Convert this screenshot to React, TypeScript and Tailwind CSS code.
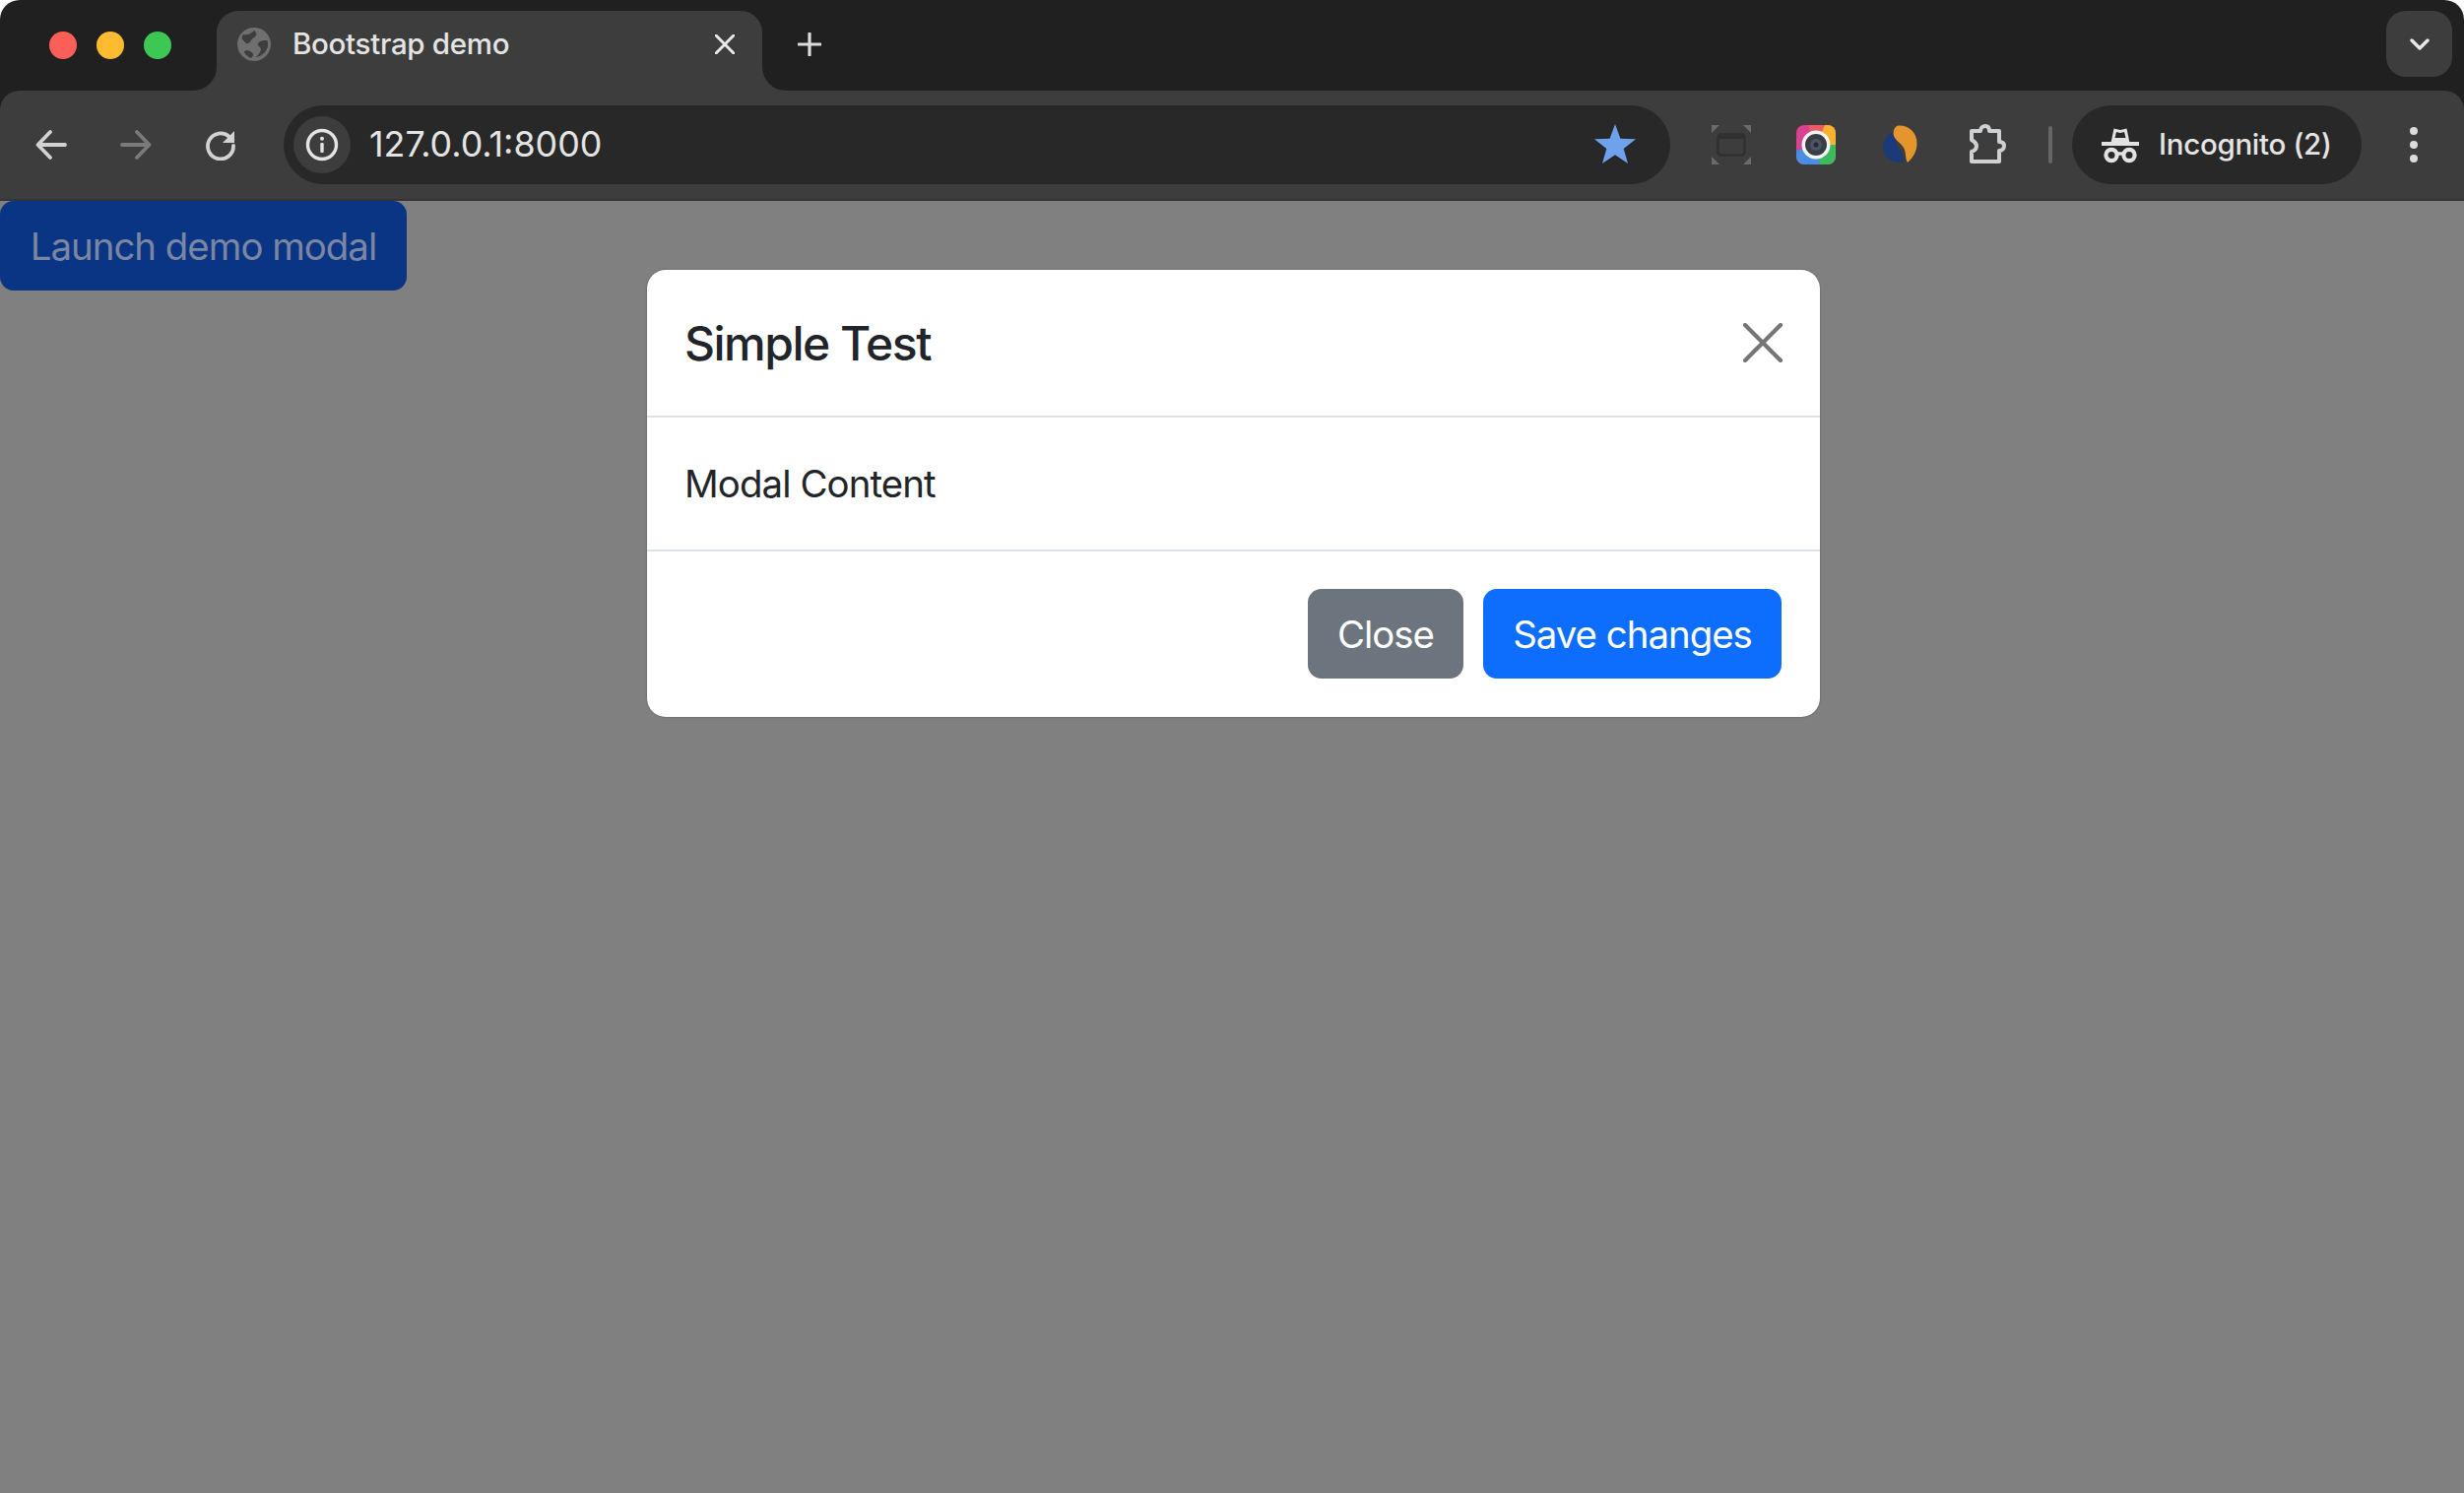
const sys = "font-['Inter','Liberation_Sans',sans-serif]";

function Globe() {
  return (
    <svg width="36" height="36" viewBox="0 0 36 36">
      <circle cx="18" cy="18" r="17" fill="#6f6f6f" />
      <path d="M7 8c5 1 8-1 11-4 3 2 3 5 0 7-3 1-3 5-6 6-3 1-4-3-6-4-1-2 0-3 1-5zM31 14c-3 0-7 0-9 3-1 3 2 3 3 6 0 3-3 5-5 8 6-1 12-6 12-13 0-2 0-3-1-4zM10 24c3 0 6 2 7 4 0 2-1 3-2 4-3-1-6-4-7-6 0-1 1-2 2-2z" fill="#3d3d3d" />
    </svg>
  );
}

function Back({ color }: { color: string }) {
  return (
    <svg width="32" height="30" viewBox="0 0 32 30" fill="none" stroke={color} strokeWidth="3.8" strokeLinecap="round" strokeLinejoin="round">
      <path d="M30 15H3M15 2 2.5 15 15 28" />
    </svg>
  );
}

function Forward({ color }: { color: string }) {
  return (
    <svg width="32" height="30" viewBox="0 0 32 30" fill="none" stroke={color} strokeWidth="3.8" strokeLinecap="round" strokeLinejoin="round">
      <path d="M2 15h27M17 2l12.500 13L17 28" />
    </svg>
  );
}

function Reload() {
  return (
    <svg width="32" height="32" viewBox="0 0 32 32" fill="none">
      <path d="M25 8A13 13 0 1 0 29 17" stroke="#d2d2d2" strokeWidth="3.8" strokeLinecap="round" />
      <path d="M30 2v12H18z" fill="#d2d2d2" />
    </svg>
  );
}

function Info() {
  return (
    <svg width="34" height="34" viewBox="0 0 34 34" fill="none">
      <circle cx="17" cy="17" r="14.500" stroke="#e4e4e4" strokeWidth="3.400" />
      <rect x="15.300" y="15" width="3.400" height="10" rx="1" fill="#e4e4e4" />
      <circle cx="17" cy="10.800" r="2" fill="#e4e4e4" />
    </svg>
  );
}

function Star() {
  return (
    <svg width="42" height="40" viewBox="0 0 42 40" className="-translate-y-[1px]">
      <path d="M21 0l5.400 14.800L42 15.300 29.700 25l4.300 15-13-8.800L8 40l4.300-15L0 15.300l15.600-.5z" fill="#6ea2ec" />
    </svg>
  );
}

function ScreenIcon() {
  return (
    <svg width="40" height="40" viewBox="0 0 40 40" fill="none">
      <path d="M0 0h8L0 8zM40 0v8L32 0zM0 40v-8l8 8zM40 40h-8l8-8z" fill="#6b6b6b" />
      <rect x="6.500" y="9.500" width="27" height="21" rx="3" stroke="#303030" strokeWidth="2.500" />
      <path d="M8 11h24v3H8z" fill="#2f2f2f" />
    </svg>
  );
}

function ColorLens() {
  return (
    <svg width="40" height="40" viewBox="0 0 40 40">
      <defs>
        <clipPath id="lens-clip">
          <rect x="0" y="0" width="40" height="40" rx="8" />
        </clipPath>
      </defs>
      <g clipPath="url(#lens-clip)">
        <rect width="40" height="40" fill="#d9428f" />
        <path d="M20 20 12 0h17z" fill="#ef5a63" />
        <path d="M20 20 29 0h11v20z" fill="#f6b32f" />
        <path d="M20 20h20v20H24z" fill="#3dbb5c" />
        <path d="M20 20 24 40H0V26z" fill="#4a8ee4" />
      </g>
      <circle cx="20" cy="20" r="14.500" fill="#f5f5f5" />
      <circle cx="20" cy="20" r="11" fill="#3a3d44" />
      <circle cx="20" cy="20" r="6" fill="#4a5568" />
      <circle cx="20" cy="20" r="2.500" fill="#262a33" />
    </svg>
  );
}

function Swirl() {
  return (
    <svg width="36" height="40" viewBox="0 0 36 40">
      <path d="M12 7C4 9 0 15 0 23c0 8 7 15 17 15 3 0 5-1 5-3-1-5-5-8-7-13-2-5-1-10-3-15z" fill="#1d3a78" />
      <path d="M14 1c9-2 18 4 20 13 2 9-2 18-9 24-3-5-1-10-4-15-3-5-8-7-10-12-1-4 0-8 3-10z" fill="#e4952c" />
    </svg>
  );
}

function Puzzle() {
  return (
    <svg width="42" height="42" viewBox="0 0 42 42" fill="none" className="translate-x-[2px]">
      <path d="M5 7h9c0-3 2-5 5-5s4 2 4 5h10v11c3 0 5 1 5 4s-2 5-5 5v11H5V28c3-1 5-3 5-6s-2-4-5-6z" stroke="#cfd0d3" strokeWidth="4" strokeLinejoin="round" />
    </svg>
  );
}

function IncognitoIcon() {
  return (
    <svg width="38" height="38" viewBox="0 0 38 38" fill="none">
      <path d="M9.500 17 12.500 2.500 19 4l6.500-1.500L28.500 17z" fill="#e2e2e2" />
      <path d="M13.500 12l1.500-6 4 1 4-1 1.500 6z" fill="#282828" />
      <path d="M0 16h38v4H0z" fill="#e2e2e2" />
      <circle cx="10" cy="29.500" r="5.600" stroke="#e2e2e2" strokeWidth="4.200" />
      <circle cx="28" cy="29.500" r="5.600" stroke="#e2e2e2" strokeWidth="4.200" />
      <path d="M15 28h8" stroke="#e2e2e2" strokeWidth="3.400" />
    </svg>
  );
}

function Cross({ size, color, width }: { size: number; color: string; width: number }) {
  return (
    <svg width={size} height={size} viewBox="0 0 40 40" fill="none" stroke={color} strokeWidth={width} strokeLinecap="round">
      <path d="M2 2l36 36M38 2 2 38" />
    </svg>
  );
}

function TabStrip() {
  return (
    <div className="flex h-[92px] items-end bg-[#202020] rounded-t-[20px]">
      <div className="flex h-full w-[196px] shrink-0 items-start gap-[20px] pl-[50px] pt-[32px]">
        <span className="h-[28px] w-[28px] rounded-full bg-[#fc5f57]" />
        <span className="h-[28px] w-[28px] rounded-full bg-[#fdbb2f]" />
        <span className="h-[28px] w-[28px] rounded-full bg-[#3dc853]" />
      </div>
      <div className="h-[24px] w-[24px] shrink-0 bg-[#3d3d3d]">
        <div className="h-full w-full rounded-br-[24px] bg-[#202020]" />
      </div>
      <div className="flex h-[81px] w-[554px] shrink-0 items-center rounded-t-[22px] bg-[#3d3d3d] pb-[14px] pl-[20px] pr-[28px]">
        <Globe />
        <span className="ml-[21px] flex-1 text-[29.5px] font-medium tracking-[-0.3px] leading-none text-[#e4e4e4]">Bootstrap demo</span>
        <Cross size={20} color="#e8e8e8" width={6} />
      </div>
      <div className="h-[24px] w-[24px] shrink-0 bg-[#3d3d3d]">
        <div className="h-full w-full rounded-bl-[24px] bg-[#202020]" />
      </div>
      <div className="ml-[12px] flex h-full items-center">
        <svg width="24" height="24" viewBox="0 0 24 24" stroke="#dcdcdc" strokeWidth="3.200" strokeLinecap="round" className="-translate-y-[1px]">
          <path d="M12 1v22M1 12h22" />
        </svg>
      </div>
      <div className="ml-auto mb-[14px] mr-[12px] flex h-[67px] w-[67px] items-center justify-center rounded-[20px] bg-[#3d3d3d]">
        <svg width="20" height="12" viewBox="0 0 20 12" fill="none" stroke="#e8e8e8" strokeWidth="3.400" strokeLinecap="round" strokeLinejoin="round">
          <path d="M2 2l8 8 8-8" />
        </svg>
      </div>
    </div>
  );
}

function Toolbar() {
  const slot = "flex h-[60px] w-[86px] shrink-0 items-center justify-center";
  return (
    <div className="bg-[#202020]">
      <div className="flex h-[112px] items-center rounded-t-[20px] border-b-2 border-[#343434] bg-[#3d3d3d] pl-[9px]">
        <div className={slot}><Back color="#d2d2d2" /></div>
        <div className={slot}><Forward color="#7b7b7b" /></div>
        <div className={slot}><Reload /></div>
        <div className="ml-[21px] flex h-[80px] w-[1408px] shrink-0 items-center rounded-full bg-[#282828] pl-[10px] pr-[35px]">
          <div className="flex h-[58px] w-[58px] items-center justify-center rounded-full bg-[#3d3d3d]">
            <Info />
          </div>
          <span className="ml-[19px] flex-1 text-[35.8px] leading-none text-[#e4e4e4]">127.0.0.1:8000</span>
          <Star />
        </div>
        <div className={`${slot} ml-[19px]`}><ScreenIcon /></div>
        <div className={slot}><ColorLens /></div>
        <div className={slot}><Swirl /></div>
        <div className={slot}><Puzzle /></div>
        <div className="ml-[21px] h-[38px] w-[4px] shrink-0 rounded-full bg-[#666666]" />
        <div className="ml-[20px] flex h-[80px] w-[294px] shrink-0 items-center rounded-full bg-[#282828] pl-[30px]">
          <IncognitoIcon />
          <span className="ml-[20px] text-[29.5px] font-medium tracking-[-0.3px] leading-none text-[#e4e4e4]">Incognito (2)</span>
        </div>
        <div className="ml-[27px] flex h-[60px] w-[52px] shrink-0 flex-col items-center justify-center gap-[6px]">
          <span className="h-[8px] w-[8px] rounded-full bg-[#dcdcdc]" />
          <span className="h-[8px] w-[8px] rounded-full bg-[#dcdcdc]" />
          <span className="h-[8px] w-[8px] rounded-full bg-[#dcdcdc]" />
        </div>
      </div>
    </div>
  );
}

function Modal() {
  return (
    <div className="absolute left-[657px] top-[70px] w-[1191px] rounded-[19px] bg-white text-[#212529] shadow-[0_0_2px_rgba(0,0,0,0.35)]">
      <div className="flex h-[150px] items-center justify-between border-b-2 border-[#dee2e6] px-[38px]">
        <h5 className="pt-[2px] text-[48px] font-medium tracking-[-1.5px] leading-none">Simple Test</h5>
        <Cross size={40} color="#757575" width={4.2} />
      </div>
      <div className="flex h-[136px] items-center border-b-2 border-[#dee2e6] px-[38px] pt-[1px] text-[38.4px] tracking-[-0.9px] leading-none">
        Modal Content
      </div>
      <div className="flex h-[168px] items-center justify-end gap-[20px] pb-[1px] pr-[39px]">
        <button className="h-[91px] w-[158px] rounded-[14px] bg-[#6c757d] pt-[3px] text-[38.4px] tracking-[-1px] text-white">Close</button>
        <button className="h-[91px] w-[303px] rounded-[14px] bg-[#0d6efd] pt-[3px] text-[38.4px] tracking-[-1px] text-white">Save changes</button>
      </div>
    </div>
  );
}

export default function App() {
  return (
    <div className={`flex h-[1516px] w-[2502px] flex-col overflow-hidden bg-white ${sys}`}>
      <TabStrip />
      <Toolbar />
      <main className="relative flex-1 bg-[#808080]">
        <button className="block h-[91px] w-[413px] rounded-[14px] bg-[#0a3585] pt-[2px] text-[38.4px] tracking-[-1px] text-[#7b86a2]">
          Launch demo modal
        </button>
        <Modal />
      </main>
    </div>
  );
}
